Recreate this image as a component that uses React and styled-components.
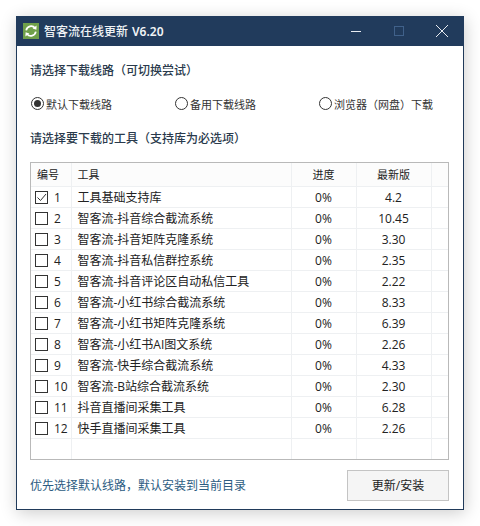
import styled, { createGlobalStyle } from 'styled-components';

const GlobalStyle = createGlobalStyle`
  html, body { margin: 0; padding: 0; background: #fff; }
  body { font-family: "Open Sans", "Noto Sans CJK SC", sans-serif; }
`;

const tools = [
  { name: '工具基础支持库', version: '4.2', checked: true },
  { name: '智客流-抖音综合截流系统', version: '10.45' },
  { name: '智客流-抖音矩阵克隆系统', version: '3.30' },
  { name: '智客流-抖音私信群控系统', version: '2.35' },
  { name: '智客流-抖音评论区自动私信工具', version: '2.22' },
  { name: '智客流-小红书综合截流系统', version: '8.33' },
  { name: '智客流-小红书矩阵克隆系统', version: '6.39' },
  { name: '智客流-小红书AI图文系统', version: '2.26' },
  { name: '智客流-快手综合截流系统', version: '4.33' },
  { name: '智客流-B站综合截流系统', version: '2.30' },
  { name: '抖音直播间采集工具', version: '6.28' },
  { name: '快手直播间采集工具', version: '2.26' },
];

const routes = [
  { label: '默认下载线路', selected: true },
  { label: '备用下载线路' },
  { label: '浏览器（网盘）下载' },
];

const Page = styled.div`
  width: 480px;
  height: 526px;
  padding: 16px;
  box-sizing: border-box;
  overflow: hidden;
`;

const Win = styled.div`
  width: 448px;
  height: 494px;
  box-sizing: border-box;
  background: #fff;
  border: 1px solid #203a5a;
  border-top: none;
  box-shadow: 1px 3px 16px rgba(0, 0, 0, 0.2);
  display: flex;
  flex-direction: column;
`;

const TitleBar = styled.div`
  height: 30px;
  margin: 0 -1px;
  flex: none;
  background: #213b5c;
  display: flex;
  align-items: center;
  padding-left: 7px;
  color: #f0f3f6;
  font-size: 12px;
  font-weight: 500;
`;

const Logo = styled.svg`
  width: 16px;
  height: 16px;
  margin-right: 5px;
  flex: none;
`;

const TitleText = styled.span`
  flex: 1;
  font-size: 12px;
`;

const Version = styled.span`
  font-family: "Noto Sans", sans-serif;
  font-weight: 600;
  margin-left: 4px;
`;

const Controls = styled.div`
  display: flex;
  align-items: center;
  height: 100%;
  padding-right: 15px;
`;

const ControlIcon = styled.svg`
  display: block;
  width: 14px;
  height: 14px;
  margin-left: ${(p) => p.$gap}px;
`;

const Body = styled.div`
  flex: 1;
  display: flex;
  flex-direction: column;
  padding: 0 14px 8px 13px;
  min-height: 0;
`;

const Heading = styled.h2`
  margin: ${(p) => p.$top}px 0 0;
  font-size: 12px;
  line-height: 18px;
  font-weight: 500;
  color: #2a3a4c;
`;

const RadioRow = styled.div`
  display: flex;
  margin-top: 15px;
  height: 18px;
  align-items: center;
`;

const RadioOption = styled.label`
  flex: 0 0 144px;
  display: flex;
  align-items: center;
  font-size: 11px;
  color: #333;
  padding-left: 1px;
  box-sizing: border-box;

  &:last-child { flex: 1; }
`;

const RadioMark = styled.span`
  width: 13px;
  height: 13px;
  box-sizing: border-box;
  border: 1px solid #333;
  border-radius: 50%;
  margin-right: 2px;
  flex: none;
  display: flex;
  align-items: center;
  justify-content: center;

  &::after {
    content: "";
    display: ${(p) => (p.$on ? 'block' : 'none')};
    width: 7px;
    height: 7px;
    border-radius: 50%;
    background: #333;
  }
`;

const TableBox = styled.div`
  margin-top: 14px;
  width: 419px;
  height: 298px;
  box-sizing: border-box;
  border: 1px solid #b9b9b9;
  flex: none;
  overflow: hidden;
`;

const Table = styled.table`
  width: 417px;
  table-layout: fixed;
  border-collapse: collapse;
  font-size: 12px;
  color: #222;
`;

const HeadCell = styled.th`
  height: 23px;
  padding: 0 0 0 ${(p) => (p.$left ? '6px' : '0')};
  box-sizing: border-box;
  font-weight: 400;
  font-size: 11px;
  text-align: ${(p) => (p.$left ? 'left' : 'center')};
  background: #fcfcfc;
  border-right: 1px solid #eef0f2;
  border-bottom: 1px solid #eef0f2;

  &:last-child { border-right: none; }
`;

const Cell = styled.td`
  height: 21px;
  padding: 2px 0 0 ${(p) => (p.$left ? '6px' : '0')};
  box-sizing: border-box;
  text-align: ${(p) => (p.$left ? 'left' : 'center')};
  border-right: 1px solid #eef0f2;
  border-bottom: 1px solid #eef0f2;
  white-space: nowrap;
  line-height: 18px;

  &:last-child { border-right: none; }
`;

const NumberWrap = styled.div`
  display: flex;
  align-items: center;
  padding-left: 4px;
`;

const Check = styled.span`
  width: 13px;
  height: 13px;
  box-sizing: border-box;
  border: 1px solid #333;
  margin-right: 6px;
  flex: none;
  display: flex;
`;

const Footer = styled.div`
  display: flex;
  justify-content: space-between;
  align-items: center;
  width: 419px;
  margin-top: 10px;
`;

const Hint = styled.span`
  font-size: 12px;
  color: #2c5c82;
  padding-bottom: 2px;
`;

const InstallButton = styled.button`
  width: 102px;
  height: 31px;
  box-sizing: border-box;
  border: 1px solid #c4c4c4;
  background: #f5f5f5;
  color: #222;
  font-family: inherit;
  font-size: 12px;
  padding: 0 0 1px;
`;

const LogoIcon = () => (
  <Logo viewBox="0 0 16 16">
    <rect width="16" height="16" fill="#6fa04a" />
    <path d="M3.2 7.4A5 5 0 0 1 12 5" fill="none" stroke="#fff" strokeWidth="1.7" />
    <path d="M13.6 2.6 13.4 6.8 9.6 5.6Z" fill="#fff" />
    <path d="M12.8 8.6A5 5 0 0 1 4 11" fill="none" stroke="#fff" strokeWidth="1.7" />
    <path d="M2.4 13.4 2.6 9.2 6.4 10.4Z" fill="#fff" />
  </Logo>
);

const App = () => (
  <Page>
    <GlobalStyle />
    <Win>
      <TitleBar>
        <LogoIcon />
        <TitleText>
          智客流在线更新
          <Version>V6.20</Version>
        </TitleText>
        <Controls>
          <ControlIcon viewBox="0 0 14 14" $gap={0}>
            <path d="M2 7.5H12" stroke="#e8ecf1" strokeWidth="1" />
          </ControlIcon>
          <ControlIcon viewBox="0 0 14 14" $gap={29}>
            <rect x="2.5" y="2.5" width="9" height="9" fill="none" stroke="#40618a" />
          </ControlIcon>
          <ControlIcon viewBox="0 0 14 14" $gap={29}>
            <path d="M1 1 13 13M13 1 1 13" stroke="#e8ecf1" strokeWidth="1" />
          </ControlIcon>
        </Controls>
      </TitleBar>
      <Body>
        <Heading $top={16}>请选择下载线路（可切换尝试）</Heading>
        <RadioRow>
          {routes.map((r) => (
            <RadioOption key={r.label}>
              <RadioMark $on={r.selected} />
              {r.label}
            </RadioOption>
          ))}
        </RadioRow>
        <Heading $top={18}>请选择要下载的工具（支持库为必选项）</Heading>
        <TableBox>
          <Table>
            <colgroup>
              <col width="40" />
              <col width="220" />
              <col width="65" />
              <col width="75" />
              <col width="17" />
            </colgroup>
            <thead>
              <tr>
                <HeadCell $left>编号</HeadCell>
                <HeadCell $left>工具</HeadCell>
                <HeadCell>进度</HeadCell>
                <HeadCell>最新版</HeadCell>
                <HeadCell />
              </tr>
            </thead>
            <tbody>
              {tools.map((t, i) => (
                <tr key={t.name}>
                  <Cell>
                    <NumberWrap>
                      <Check>
                        {t.checked && (
                          <svg viewBox="0 0 11 11" width="11" height="11">
                            <path d="M1.5 5.5 4.5 8.5 10 2" fill="none" stroke="#333" />
                          </svg>
                        )}
                      </Check>
                      {i + 1}
                    </NumberWrap>
                  </Cell>
                  <Cell $left>{t.name}</Cell>
                  <Cell>0%</Cell>
                  <Cell>{t.version}</Cell>
                  <Cell />
                </tr>
              ))}
              <tr>
                <Cell />
                <Cell />
                <Cell />
                <Cell />
                <Cell />
              </tr>
            </tbody>
          </Table>
        </TableBox>
        <Footer>
          <Hint>优先选择默认线路，默认安装到当前目录</Hint>
          <InstallButton>更新/安装</InstallButton>
        </Footer>
      </Body>
    </Win>
  </Page>
);

export default App;
